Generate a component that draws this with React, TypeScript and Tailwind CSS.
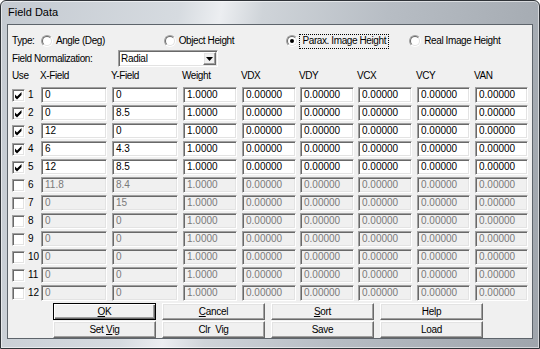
import React from 'react';

const cols = ['w-[66px]', 'w-[66px] ml-[5px]', 'w-[54px] ml-[5px]', 'w-[54px] ml-[5px]', 'w-[54px] ml-[4px]', 'w-[54px] ml-[4px]', 'w-[53px] ml-[5px]', 'w-[53px] ml-[5px]'];
const heads = ['X-Field', 'Y-Field', 'Weight', 'VDX', 'VDY', 'VCX', 'VCY', 'VAN'];

const rows = [
  { x: '0', y: '0', on: true },
  { x: '0', y: '8.5', on: true },
  { x: '12', y: '0', on: true },
  { x: '6', y: '4.3', on: true },
  { x: '12', y: '8.5', on: true },
  { x: '11.8', y: '8.4', on: false },
  { x: '0', y: '15', on: false },
  { x: '0', y: '0', on: false },
  { x: '0', y: '0', on: false },
  { x: '0', y: '0', on: false },
  { x: '0', y: '0', on: false },
  { x: '0', y: '0', on: false },
];

const sunken =
  'border border-t-[#a0a0a0] border-l-[#a0a0a0] border-r-white border-b-white shadow-[inset_1px_1px_0_#696969,inset_-1px_-1px_0_#e3e3e3]';
const raised =
  'border border-t-white border-l-white border-r-[#696969] border-b-[#696969] shadow-[inset_-1px_-1px_0_#a0a0a0,inset_1px_1px_0_#e3e3e3]';

function Radio({ on }: { on?: boolean }) {
  return (
    <div className="w-[12px] h-[12px] shrink-0 rounded-full border border-t-[#a0a0a0] border-l-[#a0a0a0] border-r-white border-b-white">
      <div className="w-full h-full rounded-full bg-white border border-t-[#696969] border-l-[#696969] border-r-[#e3e3e3] border-b-[#e3e3e3] flex items-center justify-center">
        {on && <div className="w-[4px] h-[4px] rounded-full bg-black" />}
      </div>
    </div>
  );
}

function Check({ on }: { on: boolean }) {
  return (
    <div className={`relative w-[13px] h-[13px] shrink-0 bg-white ${sunken}`}>
      {on && (
        <svg width="13" height="13" viewBox="0 0 13 13" className="absolute -left-px -top-px">
          <path d="M3 5.5 L5 7.5 L9.5 3 V6 L5 10.5 L3 8.5 Z" fill="#000" />
        </svg>
      )}
    </div>
  );
}

function Cell({ w, v, on }: { w: string; v: string; on: boolean }) {
  return (
    <div
      className={`${w} h-[16px] flex items-center pl-[3px] ${sunken} ${on ? 'bg-white text-black' : 'bg-[#f0f0f0] text-[#7a7a7a]'}`}
    >
      {v}
    </div>
  );
}

function Btn({ children, def }: { children: React.ReactNode; def?: boolean }) {
  return (
    <div
      className={`w-[103px] h-[17px] flex items-center justify-center bg-[#f0f0f0] tracking-[-0.3px] ${
        def
          ? 'border border-black shadow-[inset_1px_1px_0_#fff,inset_-1px_-1px_0_#696969,inset_-2px_-2px_0_#a0a0a0]'
          : raised
      }`}
    >
      {children}
    </div>
  );
}

export default function App() {
  const types = ['Angle (Deg)', 'Object Height', 'Parax. Image Height', 'Real Image Height'];
  return (
    <div className="w-[540px] h-[349px] flex flex-col px-[6px] pb-[9px] border border-[#2f3338] rounded-t-[6px] bg-[linear-gradient(100deg,#c4cad1_0%,#d6dbe0_30%,#eceef1_37%,#cfd4d9_44%,#b7bdc4_65%,#9fa5ac_100%)] shadow-[inset_0_0_0_1px_rgba(255,255,255,0.55)] font-['Liberation_Sans',Arial,sans-serif] text-[10px] text-black leading-none">
      <div className="h-[24px] flex items-center pl-[1px] text-[11px] tracking-normal">Field Data</div>
      <div className="flex-1 flex flex-col bg-[#f0f0f0] border border-[#5d646b]">
        {/* type radios */}
        <div className="mt-[8px] h-[16px] flex items-center pl-[4px] tracking-[-0.4px]">
          <div className="w-[29px]">Type:</div>
          {types.map((t, i) => (
            <div key={t} className="w-[123px] flex items-center">
              <Radio on={i === 2} />
              {i === 2 ? (
                <span className="ml-[1px] h-[15px] flex items-center px-[2px] border border-dotted border-black">{t}</span>
              ) : (
                <span className="ml-[3px]">{t}</span>
              )}
            </div>
          ))}
        </div>

        {/* normalization */}
        <div className="mt-[1px] h-[17px] flex items-center pl-[4px]">
          <div className="w-[106px] tracking-[-0.4px]">Field Normalization:</div>
          <div className={`w-[100px] h-[17px] flex items-center bg-white ${sunken}`}>
            <span className="flex-1 pl-[2px] tracking-[-0.3px]">Radial</span>
            <div className={`w-[13px] h-[13px] mr-[1px] flex items-center justify-center bg-[#f0f0f0] ${raised}`}>
              <svg width="7" height="4" viewBox="0 0 7 4">
                <path d="M0 0 H7 L3.5 4 Z" fill="#000" />
              </svg>
            </div>
          </div>
        </div>

        {/* headers */}
        <div className="h-[18px] flex items-center pl-[4px] tracking-[-0.4px]">
          <div className="w-[28px]">Use</div>
          {heads.map((h, i) => (
            <div key={h} className={cols[i]}>
              {h}
            </div>
          ))}
        </div>

        {/* rows */}
        <div className="mt-[2px] flex flex-col gap-[2px]">
          {rows.map((r, i) => (
            <div key={i} className="h-[16px] flex items-center pl-[4px]">
              <div className="w-[29px] flex items-center">
                <Check on={r.on} />
                <span className="ml-[3px]">{i + 1}</span>
              </div>
              <Cell w={cols[0]} v={r.x} on={r.on} />
              <Cell w={cols[1]} v={r.y} on={r.on} />
              <Cell w={cols[2]} v="1.0000" on={r.on} />
              {cols.slice(3).map((c) => (
                <Cell key={c} w={c} v="0.00000" on={r.on} />
              ))}
            </div>
          ))}
        </div>

        {/* buttons */}
        <div className="mt-[2px] ml-[45px] flex flex-col gap-[1px]">
          <div className="flex gap-[6px]">
            <Btn def>
              <span className="underline underline-offset-1">O</span>K
            </Btn>
            <Btn>
              <span className="underline underline-offset-1">C</span>ancel
            </Btn>
            <Btn>
              <span className="underline underline-offset-1">S</span>ort
            </Btn>
            <Btn>Help</Btn>
          </div>
          <div className="flex gap-[6px]">
            <Btn>
              Set&nbsp;<span className="underline underline-offset-1">V</span>ig
            </Btn>
            <Btn>Clr&nbsp;&nbsp;Vig</Btn>
            <Btn>Save</Btn>
            <Btn>Load</Btn>
          </div>
        </div>
      </div>
    </div>
  );
}
